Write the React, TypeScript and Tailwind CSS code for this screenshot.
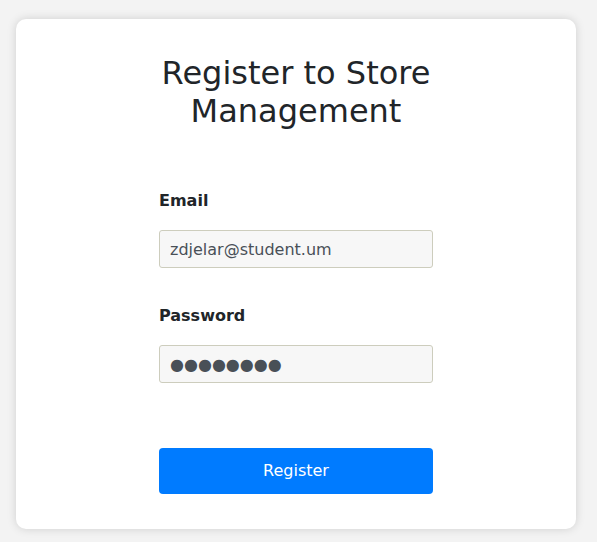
import React from 'react';

export default function App() {
    return (
        <div className="min-h-screen bg-[#f3f3f3] pl-4 pr-[21px] pt-[19px] pb-[13px] font-['DejaVu_Sans',sans-serif]">
            <div className="bg-white rounded-[10px] shadow-[0_0_10px_rgba(0,0,0,0.15)] pt-[35px] pb-[35px]">
                <div className="w-[274px] mx-auto">
                    <h1 className="text-[32px] leading-[38px] text-center text-[#212529] font-normal">
                        Register to Store Management
                    </h1>

                    <form className="mt-[60px] flex flex-col" onSubmit={(e) => e.preventDefault()}>
                        <label className="text-[16px] leading-[22px] font-bold text-[#212529]">Email</label>
                        <input
                            type="email"
                            defaultValue="zdjelar@student.um"
                            className="mt-[18px] h-[38px] w-full rounded-[3px] border border-[#cdcdbd] bg-[#f7f7f7] px-[10px] text-[16px] text-[#495057] outline-none"
                        />

                        <label className="mt-[37px] text-[16px] leading-[22px] font-bold text-[#212529]">Password</label>
                        <input
                            type="text"
                            aria-label="Password"
                            defaultValue="●●●●●●●●"
                            className="mt-[18px] h-[38px] w-full rounded-[3px] border border-[#cdcdbd] bg-[#f7f7f7] px-[10px] text-[16px] text-[#495057] outline-none"
                        />

                        <button
                            type="submit"
                            className="mt-[65px] h-[46px] w-full rounded-[4px] bg-[#007bff] text-[16px] text-white"
                        >
                            Register
                        </button>
                    </form>
                </div>
            </div>
        </div>
    );
}
